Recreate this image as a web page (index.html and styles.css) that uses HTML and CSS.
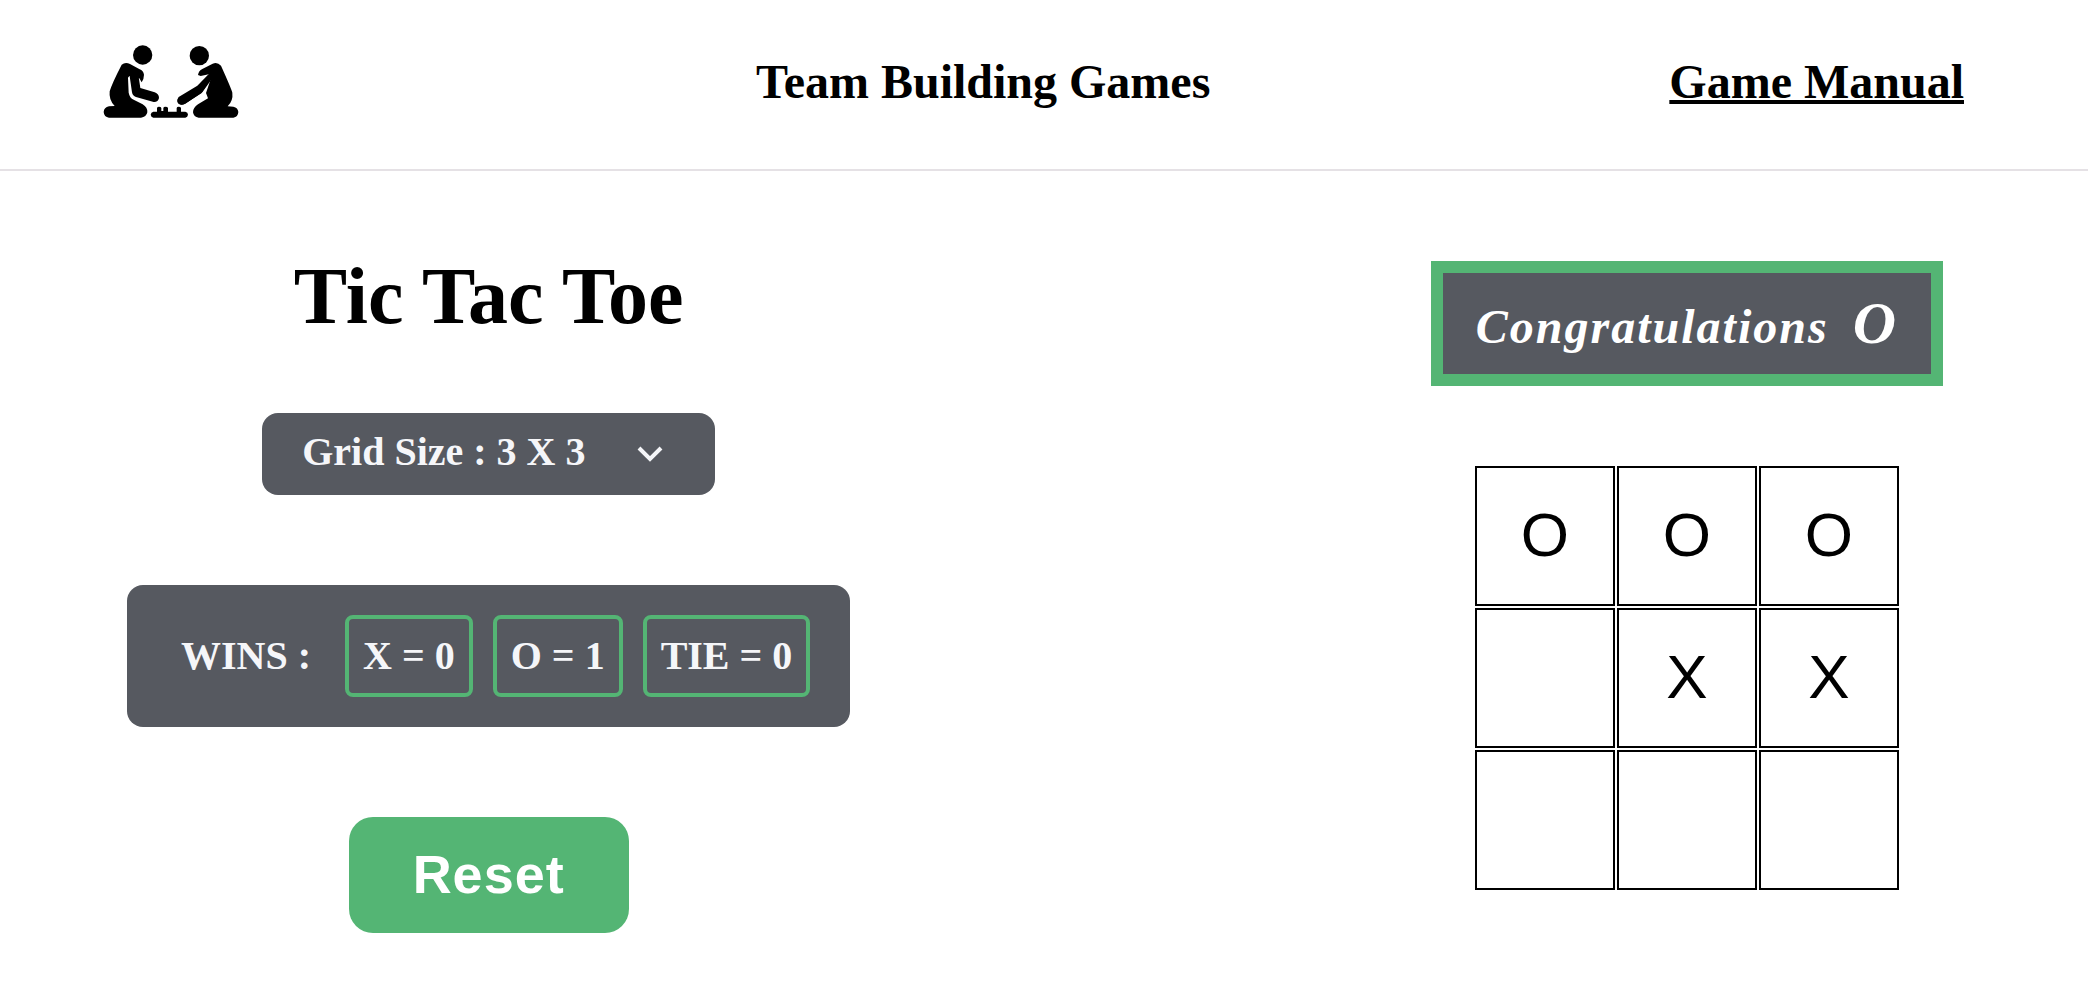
FILE: index.html
```html
<!DOCTYPE html>
<html lang="en">
<head>
  <meta charset="utf-8">
  <meta name="viewport" content="width=device-width, initial-scale=1">
  <title>Team Building Games</title>
  <link rel="stylesheet" href="styles.css">
</head>
<body>
  <header class="site-header">
    <div class="logo">
      <svg class="logo-art" viewBox="39 45 408 219" role="img" aria-label="Two people playing a board game">
        <circle cx="158" cy="75" r="29"/>
        <circle cx="328" cy="77" r="29"/>
        <path d="M95 104Q106 95 120 102L149 118Q160 122 162 134Q162 147 155 157L148 145L118 138L114 143L116 188Q119 204 131 209L158 223Q173 232 172 247Q169 262 153 263H57Q42 261 41 246Q42 232 57 229L74 228Q56 210 59 184Q66 160 95 104Z"/>
        <path d="M118 132Q134 126 146 140L151 174L194 187Q207 192 207 204Q204 217 191 216L138 201Q128 198 126 187Z"/>
        <path d="M393 107Q382 95 368 101L337 117Q326 122 324 135L332 138L360 132L330 175L265 204Q259 214 267 222Q276 227 287 220L334 190L363 145L348 189L354 205L324 223Q309 233 309 247Q311 261 326 263H430Q444 261 445 246Q444 233 430 230L413 229Q430 212 427 188Q425 178 393 107Z"/>
        <path d="M360 128L322 167L266 201Q259 211 264 220Q274 228 286 221L337 187L366 146Z"/>
        <path d="M190 245H201V234Q202 230 207 230Q213 230 214 234V243H220V234Q221 230 226 230Q233 230 234 234V245H260V234Q261 230 266 230Q272 230 273 234V245H286Q294 247 294 254Q293 261 286 263H190Q183 261 182 254Q183 247 190 245Z"/>
      </svg>
    </div>
    <h2 class="site-title">Team Building Games</h2>
    <a class="manual-link" href="#manual">Game Manual</a>
  </header>

  <main class="game">
    <section class="controls">
      <h1 class="game-title">Tic Tac Toe</h1>
      <div class="grid-size">
        <select class="grid-select" aria-label="Grid size">
          <option>Grid Size : 3 X 3</option>
          <option>Grid Size : 4 X 4</option>
          <option>Grid Size : 5 X 5</option>
        </select>
        <svg class="chevron" viewBox="0 0 24 24" aria-hidden="true"><path d="M1 6L12 17L23 6"/></svg>
      </div>
      <div class="wins">
        <span class="wins-label">WINS :</span>
        <span class="score">X = 0</span>
        <span class="score">O = 1</span>
        <span class="score">TIE = 0</span>
      </div>
      <button class="reset" type="button">Reset</button>
    </section>

    <section class="play">
      <p class="banner">Congratulations <span class="winner">O</span></p>
      <div class="board">
        <button class="cell" type="button">O</button>
        <button class="cell" type="button">O</button>
        <button class="cell" type="button">O</button>
        <button class="cell" type="button" aria-label="Empty"></button>
        <button class="cell" type="button">X</button>
        <button class="cell" type="button">X</button>
        <button class="cell" type="button" aria-label="Empty"></button>
        <button class="cell" type="button" aria-label="Empty"></button>
        <button class="cell" type="button" aria-label="Empty"></button>
      </div>
    </section>
  </main>
</body>
</html>
```
FILE: styles.css
```css
:root {
  --slate: #565960;
  --green: #54b574;
  --light: #f5f6f9;
}

* {
  box-sizing: border-box;
}

body {
  margin: 0;
  background: #fff;
  color: #000;
  font-family: "Liberation Serif", "Times New Roman", serif;
  font-weight: bold;
}

.site-header {
  display: flex;
  align-items: center;
  justify-content: space-between;
  min-height: 171px;
  padding: 0 124px 6px 103px;
  border-bottom: 2px solid #e5e1e5;
}

.logo {
  width: 194px;
}

.logo-art {
  display: block;
  width: 136px;
  height: 73px;
}

.site-title,
.manual-link {
  margin: 0;
  font-size: 48px;
  line-height: 56px;
}

.manual-link {
  color: inherit;
  text-decoration-thickness: 4px;
}

.game {
  display: flex;
  align-items: flex-start;
  justify-content: space-between;
  padding: 90px 145px 60px 127px;
}

.controls,
.play {
  display: flex;
  flex-direction: column;
  align-items: center;
}

.controls {
  gap: 90px;
}

.play {
  gap: 80px;
}

.game-title {
  margin: 0 0 -8px;
  font-size: 80px;
  line-height: 70px;
}

.grid-size {
  position: relative;
}

.grid-select {
  display: block;
  width: 453px;
  height: 82px;
  padding: 0 40px 6px;
  appearance: none;
  border: 0;
  border-radius: 16px;
  background: var(--slate);
  color: var(--light);
  font: bold 40px "Liberation Serif", "Times New Roman", serif;
}

.chevron {
  position: absolute;
  top: 29px;
  right: 53px;
  width: 24px;
  height: 24px;
  fill: none;
  stroke: var(--light);
  stroke-width: 4;
  overflow: visible;
  pointer-events: none;
}

.wins {
  display: flex;
  align-items: center;
  gap: 20px;
  padding: 30px 40px;
  border-radius: 16px;
  background: var(--slate);
  color: var(--light);
  font-size: 40px;
  line-height: 46px;
}

.wins-label {
  padding: 0 14px;
}

.score {
  padding: 14px;
  border: 4px solid var(--green);
  border-radius: 8px;
}

.reset {
  padding: 27px 64px 29px;
  border: 0;
  border-radius: 24px;
  background: var(--green);
  color: #fff;
  font: bold 54px/60px "Liberation Sans", Arial, sans-serif;
  letter-spacing: 1px;
}

.banner {
  margin: 0;
  padding: 16px 33px;
  border: 12px solid var(--green);
  background: var(--slate);
  color: #fff;
  font-size: 48px;
  font-style: italic;
  letter-spacing: 2px;
}

.winner {
  margin-left: 10px;
  font-size: 60px;
}

.board {
  display: grid;
  grid-template-columns: repeat(3, 140px);
  grid-auto-rows: 140px;
  gap: 2px;
}

.cell {
  padding: 0 0 4px;
  border: 2px solid #000;
  background: #fff;
  color: #000;
  font: 62px "Liberation Sans", Arial, sans-serif;
}
```
